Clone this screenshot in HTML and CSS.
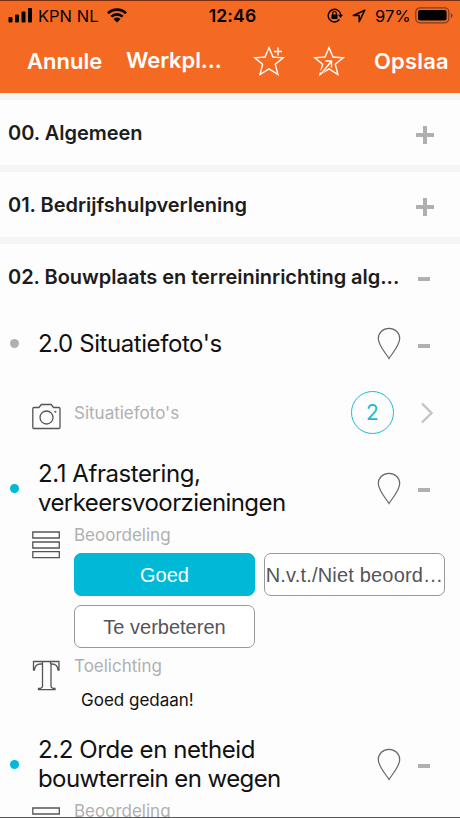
FILE: index.html
```html
<!DOCTYPE html>
<html lang="nl">
<head>
    <meta charset="utf-8">
    <title>Werkplekinspectie</title>
    <link rel="stylesheet" href="styles.css">
</head>
<body>
    <header>
        <div class="status">
            <div class="carrier">
                <svg width="24" height="15" viewBox="0 0 24 15">
                    <rect x="0.500" y="9" width="4" height="5.500" rx="1" />
                    <rect x="7" y="6.500" width="4" height="8" rx="1" />
                    <rect x="13.500" y="3.500" width="4" height="11" rx="1" />
                    <rect x="20" y="0" width="4" height="14.500" rx="1" />
                </svg>
                <span class="provider">KPN NL</span>
                <svg class="wifi" width="20" height="15" viewBox="0 0 20 15">
                    <path d="M1 5.200a13 13 0 0 1 18 0M4.300 8.600a8.200 8.200 0 0 1 11.400 0" fill="none" stroke="#000" stroke-width="2.700" />
                    <path d="M10 14.500l-3.500-3.600a5 5 0 0 1 7 0z" />
                </svg>
            </div>
            <span class="clock">12:46</span>
            <div class="power">
                <svg width="16" height="15" viewBox="0 0 16 15">
                    <path d="M12.500 11.500a6.300 6.300 0 1 1 1.300-4.500" fill="none" stroke="#000" stroke-width="1.400" />
                    <path d="M11 6.700h5l-2.500 3.300z" />
                    <rect x="4.500" y="6.500" width="6" height="4.500" rx=".5" />
                    <path d="M5.700 7V5.300a1.800 1.800 0 0 1 3.600 0V7" fill="none" stroke="#000" stroke-width="1.200" />
                </svg>
                <svg class="location" width="14" height="14" viewBox="0 0 14 14">
                    <path d="M12.800 1.200L1.300 6.500h5.900V12.700z" fill="none" stroke="#000" stroke-width="1.500" stroke-linejoin="round" />
                </svg>
                <span class="percent">97%</span>
                <svg width="38" height="17" viewBox="0 0 38 17">
                    <rect x=".8" y=".8" width="33" height="15" rx="4" fill="none" stroke="#803a1b" stroke-width="1.200" />
                    <rect x="3" y="3" width="28.600" height="10.600" rx="2" />
                    <path d="M35.800 6v5q1.700-.5 1.700-2.500t-1.700-2.500z" fill="#803a1b" />
                </svg>
            </div>
        </div>
        <nav>
            <a class="cancel">Annule</a>
            <a class="page">Werkpl...</a>
            <svg class="star" width="32" height="32" viewBox="0 0 32 32">
                <path d="M16 2.500l4 9.500 10.200.8-7.900 6.500 2.600 10.200-8.900-5.600L7 29.500l2.600-10.200L1.700 12.800 12 12z" />
                <path class="erase" d="M20 6.500h10M25 1.500v10" />
                <path d="M21 6.500h8M25 2.500v8" />
            </svg>
            <svg class="star share" width="32" height="32" viewBox="0 0 32 32">
                <path d="M16 2.500l4 9.500 10.200.8-7.900 6.500 2.600 10.200-8.900-5.600L7 29.500l2.600-10.200L1.700 12.800 12 12z" />
                <path class="erase" d="M8 28L18 16" />
                <path d="M8.500 28.500L18.500 16M12.500 16h6v6.500" />
            </svg>
            <a class="save">Opslaa</a>
        </nav>
    </header>

    <main>
        <section class="group"><h2>00. Algemeen</h2><i class="plus"></i></section>
        <section class="group"><h2>01. Bedrijfshulpverlening</h2><i class="plus"></i></section>
        <section class="group"><h2>02. Bouwplaats en terreininrichting alg...</h2><i class="minus"></i></section>

        <div class="question single">
            <i class="dot"></i>
            <h3>2.0 Situatiefoto's</h3>
            <svg class="pin" width="24" height="33" viewBox="0 0 24 33"><path d="M12 31.500C9 26.500 1.300 18.500 1.300 11.500a10.700 10.200 0 0 1 21.400 0C22.700 18.500 15 26.500 12 31.500z" /></svg>
            <i class="minus"></i>
        </div>
        <div class="photos">
            <svg class="icon" width="30" height="27" viewBox="0 0 30 27">
                <path d="M2 4.500H7l2.300-3h9.900l2.300 3h5.300q1.200 0 1.200 1.200v18.600q0 1.200-1.200 1.200H2Q.8 25.500 .8 24.300V5.700Q.8 4.500 2 4.500z" />
                <circle cx="14.500" cy="14.500" r="6.500" /><circle cx="23.300" cy="8.800" r=".4" />
            </svg>
            <span class="label">Situatiefoto's</span>
            <span class="count">2</span>
            <svg class="chevron" width="14" height="22" viewBox="0 0 14 22"><path d="M2 1.500l9.500 9.500L2 20.500" /></svg>
        </div>

        <div class="question">
            <i class="dot active"></i>
            <h3><span class="first">2.1 Afrastering,</span><br>verkeersvoorzieningen</h3>
            <svg class="pin" width="24" height="33" viewBox="0 0 24 33"><path d="M12 31.500C9 26.500 1.300 18.500 1.300 11.500a10.700 10.200 0 0 1 21.400 0C22.700 18.500 15 26.500 12 31.500z" /></svg>
            <i class="minus"></i>
        </div>
        <div class="field rating">
            <svg class="icon" width="30" height="28" viewBox="0 0 30 28"><path d="M.8 1h26.500v6H.8zM.8 11h26.500v6H.8zM.8 20.700h26.500v6H.8z" /></svg>
            <div class="content">
                <span class="label">Beoordeling</span>
                <div class="options">
                    <button class="selected">Goed</button>
                    <button class="na">N.v.t./Niet beoord…</button>
                    <button>Te verbeteren</button>
                </div>
            </div>
        </div>
        <div class="field note">
            <svg class="icon" width="30" height="31" viewBox="0 0 30 31">
                <path d="M1.500 1.500h25.500v8.500h-1q-.5-6-6-6h-1v22q0 2.500 4 2.500v1.200H6.500v-1.200q4 0 4-2.500V4h-2Q3 4 2.500 10h-1zM10.500 1.500V4M18.500 1.500V4" />
            </svg>
            <div class="content">
                <span class="label">Toelichting</span>
                <p>Goed gedaan!</p>
            </div>
        </div>

        <div class="question">
            <i class="dot active"></i>
            <h3><span class="first">2.2 Orde en netheid</span><br>bouwterrein en wegen</h3>
            <svg class="pin" width="24" height="33" viewBox="0 0 24 33"><path d="M12 31.500C9 26.500 1.300 18.500 1.300 11.500a10.700 10.200 0 0 1 21.400 0C22.700 18.500 15 26.500 12 31.500z" /></svg>
            <i class="minus"></i>
        </div>
        <div class="field rating">
            <svg class="icon" width="30" height="28" viewBox="0 0 30 28"><path d="M.8 1h26.500v6H.8zM.8 11h26.500v6H.8zM.8 20.700h26.500v6H.8z" /></svg>
            <div class="content"><span class="label">Beoordeling</span></div>
        </div>
    </main>
</body>
</html>
```

FILE: styles.css
```css
* {
    box-sizing: border-box;
}

body {
    margin: 0;
    height: 818px;
    overflow: hidden;
    display: flex;
    flex-direction: column;
    border-bottom: 1px solid #555;
    background: #fdfdfd;
    color: #111;
    font-family: Inter, "Liberation Sans", sans-serif;
}

header {
    height: 93px;
    flex: none;
    border-top: 1px solid #7d2d10;
    background: #f56a23;
}

.status {
    display: grid;
    grid-template-columns: 1fr auto 1fr;
    align-items: center;
    height: 29px;
    padding: 0 7px 0 8px;
    color: #000;
    font-size: 16.5px;
}

.carrier,
.power {
    display: flex;
    align-items: center;
}

.power {
    justify-content: flex-end;
}

.provider {
    margin-left: 6px;
}

.wifi {
    margin-left: 9px;
}

.clock {
    padding-left: 4px;
    font-size: 17.5px;
    font-weight: 600;
    letter-spacing: 0.2px;
}

.location {
    margin: 0 9px;
}

.percent {
    margin-right: 4px;
    letter-spacing: 0.2px;
}

nav {
    display: flex;
    align-items: center;
    height: 61px;
    padding-left: 27px;
    color: #fff;
    font-size: 22px;
    font-weight: 600;
}

.cancel {
    width: 99px;
}

.page {
    width: 127px;
    margin-top: -1px;
    letter-spacing: -0.1px;
}

.star {
    fill: none;
    stroke: #fff;
    stroke-width: 1.4;
}

.share {
    margin: 0 29px 0 28px;
}

.save {
    letter-spacing: 0.2px;
}

.erase {
    stroke: #f56a23;
    stroke-width: 4;
}

main {
    flex: 1;
    min-height: 0;
    overflow: hidden;
}

h2,
h3,
p {
    margin: 0;
    white-space: nowrap;
}

.group {
    display: flex;
    align-items: center;
    justify-content: space-between;
    height: 72px;
    padding: 0 26px 0 8px;
    border-top: 7px solid #f5f5f5;
}

h2 {
    color: #1c1c1c;
    font-size: 20px;
    font-weight: 600;
    letter-spacing: -0.03px;
}

.plus {
    width: 18px;
    height: 18px;
    margin: 5px 0 0;
    background: linear-gradient(#b0b0b0, #b0b0b0) center / 18px 4px no-repeat, linear-gradient(#b0b0b0, #b0b0b0) center / 4px 18px no-repeat;
}

.minus {
    width: 12px;
    height: 4px;
    background: #b0b0b0;
}

.group .minus {
    margin: 4px 4px 0 0;
}

.question {
    display: flex;
    align-items: center;
    height: 66px;
    padding: 0 30px 0 10px;
}

.single {
    height: 69px;
}

.dot {
    width: 9px;
    height: 9px;
    border-radius: 50%;
    background: #b0b0b0;
}

.active {
    background: #00b9d6;
}

h3 {
    flex: 1;
    margin-left: 19px;
    font-size: 24px;
    line-height: 29px;
    font-weight: 400;
    letter-spacing: -0.58px;
}

.single h3,
.first {
    letter-spacing: -0.42px;
}

.pin {
    margin-right: 17px;
    fill: none;
    stroke: #666;
    stroke-width: 1.2;
}

.question .minus {
    margin-top: 4px;
}

.photos {
    display: flex;
    align-items: center;
    height: 68px;
    margin-bottom: 9px;
    padding: 0 26px 0 32px;
}

.icon {
    flex: none;
    fill: none;
    stroke: #555;
    stroke-width: 1.3;
}

.label {
    color: #b0b0b0;
    font-size: 17px;
    line-height: 20px;
}

.photos .icon {
    margin: 9px 12px 0 0;
}

.photos .label {
    padding-top: 2px;
}

.count {
    display: grid;
    place-items: center;
    width: 43px;
    height: 43px;
    margin-left: auto;
    border: 1.5px solid #1fb9d3;
    border-radius: 50%;
    color: #1fb9d3;
    font-size: 21px;
}

.chevron {
    margin: 2px 0 0 26px;
    fill: none;
    stroke: #c4c4c4;
    stroke-width: 2.4;
}

.field {
    display: flex;
    gap: 12px;
    padding-left: 32px;
}

.rating {
    height: 132px;
    padding-top: 4px;
}

.rating .icon {
    margin-top: 6px;
}

.content .label {
    display: block;
}

.options {
    display: grid;
    grid-template-columns: 181px 181px;
    gap: 9px;
    margin-top: 8px;
}

button {
    height: 43px;
    padding: 2px 0 0;
    border: 1px solid #999;
    border-radius: 7px;
    background: #fff;
    color: #555;
    font-family: "Liberation Sans", Arial, sans-serif;
    font-size: 20px;
    white-space: nowrap;
}

.na {
    letter-spacing: 0.18px;
}

.selected {
    border-color: #00b9d6;
    background: #00b9d6;
    color: #fff;
}

.note {
    height: 78px;
    padding-top: 3px;
}

.note .icon {
    margin-top: 4px;
}

.note p {
    margin: 14px 0 0 7px;
    font-size: 17px;
    line-height: 20px;
}
```
